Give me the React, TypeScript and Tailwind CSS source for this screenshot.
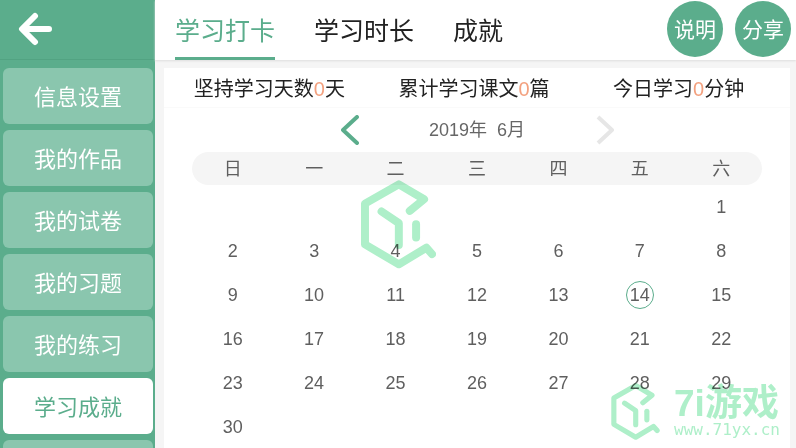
import { useState } from "react";

const menuItems = ["信息设置", "我的作品", "我的试卷", "我的习题", "我的练习", "学习成就"];

const tabs = ["学习打卡", "学习时长", "成就"];

const stats = [
  { before: "坚持学习天数", value: 0, after: "天" },
  { before: "累计学习课文", value: 0, after: "篇" },
  { before: "今日学习", value: 0, after: "分钟" },
];

const weekdays = ["日", "一", "二", "三", "四", "五", "六"];

const TODAY = 14;
const FIRST_WEEKDAY = 6;
const DAYS_IN_MONTH = 30;

const weeks = Array.from({ length: 6 }, (_, week) =>
  Array.from({ length: 7 }, (_, i) => {
    const day = week * 7 + i - FIRST_WEEKDAY + 1;
    return day > 0 && day <= DAYS_IN_MONTH ? day : null;
  })
);

function CubeLogo({ className }: { className: string }) {
  return (
    <svg
      viewBox="60 119 226 266"
      className={className}
      fill="none"
      stroke="currentColor"
      strokeWidth="24"
      strokeLinecap="round"
      strokeLinejoin="round"
      aria-hidden="true"
    >
      <path d="M207 211L250 176L174 131L72 189V312L174 372L257 322L274 341" />
      <path d="M122 213L174 248V314" />
      <path d="M226 251V291" />
    </svg>
  );
}

function Sidebar() {
  const [active, setActive] = useState("学习成就");

  return (
    <aside className="w-[155px] shrink-0 bg-[#5bad8c]">
      <div className="h-[60px] flex items-center pl-[18px] pb-px border-b border-[#52a382]">
        <button aria-label="返回">
          <svg
            width="36"
            height="34"
            viewBox="0 0 36 34"
            fill="none"
            stroke="white"
            strokeWidth="6"
            strokeLinecap="round"
            strokeLinejoin="round"
          >
            <path d="M17 4L4 17L17 30M5 17H31" />
          </svg>
        </button>
      </div>
      <nav className="flex flex-col gap-[6px] pt-2 pl-[3px] pr-[2px]">
        {menuItems.map((item) => (
          <button
            key={item}
            onClick={() => setActive(item)}
            className={`h-14 shrink-0 rounded-md pt-[2px] text-[22px] ${
              active === item ? "bg-white text-[#5bad8c]" : "bg-[#8ac6ae] text-white"
            }`}
          >
            {item}
          </button>
        ))}
        <div className="h-14 shrink-0 rounded-md bg-[#8ac6ae]" />
      </nav>
    </aside>
  );
}

function Header() {
  const [tab, setTab] = useState("学习打卡");

  return (
    <header className="h-[60px] shrink-0 flex justify-between bg-white pl-5 pr-[5px] shadow-[0_1px_2px_#dddddd]">
      <div className="flex gap-[39px]">
        {tabs.map((t) => (
          <button
            key={t}
            onClick={() => setTab(t)}
            className={`pt-[7px] text-[25px] border-b-3 ${
              tab === t ? "text-[#5bad8c] border-[#5bad8c]" : "text-[#222222] border-transparent"
            }`}
          >
            {t}
          </button>
        ))}
      </div>
      <div className="flex items-center gap-3 pb-[2px]">
        <button className="size-14 rounded-full bg-[#5bad8c] pt-[2px] text-[21px] text-white">说明</button>
        <button className="size-14 rounded-full bg-[#5bad8c] pt-[2px] text-[21px] text-white">分享</button>
      </div>
    </header>
  );
}

function Calendar() {
  return (
    <section className="px-7">
      {/* Month switcher */}
      <div className="h-11 w-[273px] mx-auto flex items-center justify-between">
        <button aria-label="上个月">
          <svg width="18" height="30" viewBox="0 0 18 30" fill="none" stroke="#5bad8c" strokeWidth="4" strokeLinecap="round" strokeLinejoin="round">
            <path d="M16 2L2 15L16 28" />
          </svg>
        </button>
        <h2 className="text-lg text-[#666666] whitespace-pre">2019年  6月</h2>
        <button aria-label="下个月">
          <svg width="18" height="30" viewBox="0 0 18 30" fill="none" stroke="#e6e6e6" strokeWidth="4" strokeLinejoin="round">
            <path d="M2 2L16 15L2 28" />
          </svg>
        </button>
      </div>

      <table className="w-full table-fixed text-center text-lg text-[#5f5f5f]">
        <thead>
          <tr className="h-[33px]">
            {weekdays.map((d) => (
              <th key={d} className="p-0 bg-[#f5f5f5] font-normal first:rounded-l-full last:rounded-r-full">
                {d}
              </th>
            ))}
          </tr>
        </thead>
        <tbody>
          {weeks.map((week, i) => (
            <tr key={i} className="h-11">
              {week.map((day, j) => (
                <td key={j} className="p-0">
                  {day === TODAY ? (
                    <span className="inline-flex size-7 items-center justify-center rounded-full border border-[#5bad8c]">
                      {day}
                    </span>
                  ) : (
                    day
                  )}
                </td>
              ))}
            </tr>
          ))}
        </tbody>
      </table>
    </section>
  );
}

export default function App() {
  return (
    <div className="relative flex h-screen overflow-hidden bg-[#f5f5f5] font-['Liberation_Sans','Noto_Sans_CJK_SC',sans-serif]">
      <Sidebar />

      <div className="flex-1 min-w-0 flex flex-col">
        <Header />
        <main className="flex-1 mt-2 ml-[9px] mr-[6px] bg-white">
          <div className="h-10 grid grid-cols-3 items-center pt-[2px] pl-[3px] pr-[9px] border-b border-[#fafafa] text-xl text-[#222222]">
            {stats.map((s) => (
              <p key={s.before} className="text-center whitespace-nowrap">
                {s.before}
                <span className="text-[#f3a17f]">{s.value}</span>
                {s.after}
              </p>
            ))}
          </div>
          <Calendar />
        </main>
      </div>

      {/* Watermarks */}
      <div className="absolute inset-0 flex items-center justify-center pointer-events-none mix-blend-multiply">
        <CubeLogo className="h-[89px] w-[75px] text-[#aeefc9]" />
      </div>
      <div className="absolute right-4 bottom-2 flex items-center gap-[14px] pointer-events-none mix-blend-multiply text-[#aeefc9]">
        <CubeLogo className="h-[57px] w-[49px]" />
        <div>
          <p className="text-[37px] leading-9 font-bold whitespace-nowrap">7i游戏</p>
          <p className="font-['DejaVu_Sans_Mono',monospace] text-base leading-4">www.71yx.cn</p>
        </div>
      </div>
    </div>
  );
}
